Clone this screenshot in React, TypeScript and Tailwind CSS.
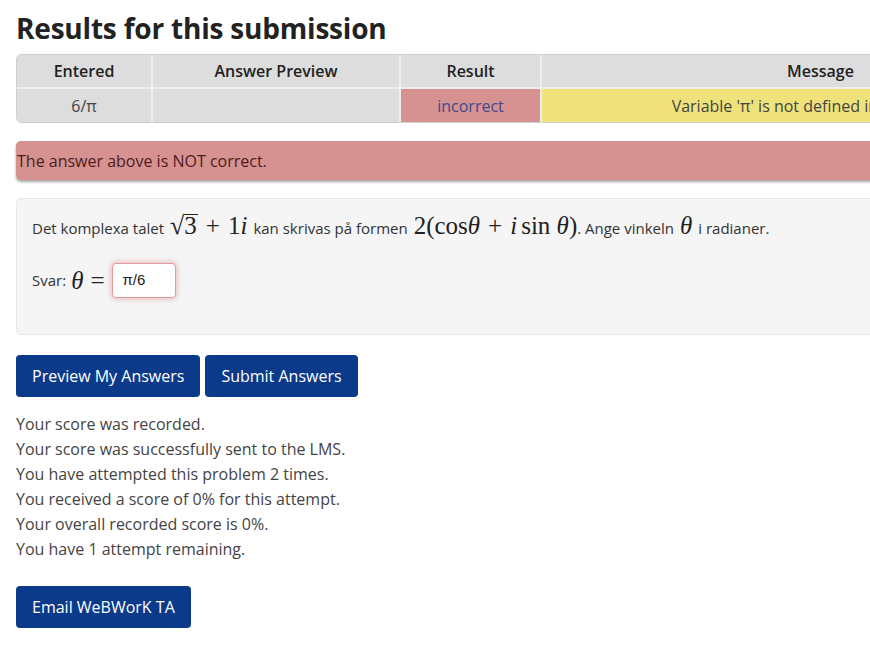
const Math = ({ children }: { children: React.ReactNode }) => (
  <span className="font-['Liberation_Serif','DejaVu_Serif',serif] text-[25px] leading-none text-[#222]">{children}</span>
);

const I = ({ children }: { children: React.ReactNode }) => <i>{children}</i>;

export default function App() {
  return (
    <div className="w-[870px] h-[662px] overflow-hidden bg-white font-['Open_Sans','Noto_Sans',sans-serif] text-[#333]">
      <div className="px-4 pt-[10px]">
        <h1 className="text-[28px] font-bold leading-[36px] text-[#222] tracking-[-0.2px]">Results for this submission</h1>

        <div className="mt-[8px] w-[1084px] rounded-[5px] border border-[#d0d0d0] overflow-hidden">
          <table className="w-full border-collapse text-[16px]">
            <thead>
              <tr className="bg-[#dddddd] h-[33px]">
                <th className="w-[135px] border-r-2 border-b-2 border-[#eeeeee] font-semibold text-[#222]">Entered</th>
                <th className="w-[248px] border-r-2 border-b-2 border-[#eeeeee] font-semibold text-[#222]">Answer Preview</th>
                <th className="w-[141px] border-r-2 border-b-2 border-[#eeeeee] font-semibold text-[#222]">Result</th>
                <th className="border-b-2 border-[#eeeeee] font-semibold text-[#222]">Message</th>
              </tr>
            </thead>
            <tbody>
              <tr className="h-[34px]">
                <td className="bg-[#dddddd] border-r-2 border-[#eeeeee] text-center text-[#444]">6/π</td>
                <td className="bg-[#dddddd] border-r-2 border-[#eeeeee]"></td>
                <td className="bg-[#d69191] border-r-2 border-[#eeeeee] text-center text-[#3f4a8c]">incorrect</td>
                <td className="bg-[#efe27a] text-center text-[#444] whitespace-nowrap">Variable 'π' is not defined in this context</td>
              </tr>
            </tbody>
          </table>
        </div>

        <div className="mt-[18px] w-[900px] h-[39px] rounded-[5px] bg-[#d69191] shadow-[0_2px_3px_rgba(0,0,0,0.35)] flex items-center pl-px text-[16px] text-[#4e1c1c]">
          The answer above is NOT correct.
        </div>

        <div className="mt-[18px] w-[900px] h-[137px] rounded-[5px] bg-[#f5f5f5] border border-[#e8e8e8] px-[15px] pt-[14px] text-[15px] text-[#333]">
          <p className="h-[30px] flex items-baseline gap-[6px] whitespace-nowrap leading-[30px]">
            <span>Det komplexa talet</span>
            <Math>
              <span className="inline-flex items-baseline">
                <span className="text-[26px]">√</span>
                <span className="border-t border-[#222] leading-[22px] pr-px">3</span>
              </span>
              <span className="mx-[8px]">+</span>1<I>i</I>
            </Math>
            <span>kan skrivas på formen</span>
            <Math>
              2(cos<I>θ</I>
              <span className="mx-[8px]">+</span>
              <I>i</I>
              <span className="ml-[4px]">sin</span> <I>θ</I>)
            </Math>
            <span className="-ml-[6px]">. Ange vinkeln</span>
            <Math>
              <I>θ</I>
            </Math>
            <span>i radianer.</span>
          </p>
          <div className="mt-[20px] h-[35px] flex items-center gap-[5px]">
            <span>Svar:</span>
            <Math>
              <I>θ</I>
              <span className="ml-[7px]">=</span>
            </Math>
            <div className="ml-[2px] w-[64px] h-[35px] rounded-[4px] border border-[#e29a9a] bg-white shadow-[0_0_4px_2px_rgba(214,120,120,0.35)] flex items-center pl-[10px] font-['Liberation_Sans',sans-serif] text-[15px] text-[#222]">
              π/6
            </div>
          </div>
        </div>

        <div className="mt-[20px] flex gap-[5px]">
          <button className="h-[42px] px-[16px] rounded-[4px] bg-[#0b3a8b] text-white text-[16px]">Preview My Answers</button>
          <button className="h-[42px] px-[16px] rounded-[4px] bg-[#0b3a8b] text-white text-[16px]">Submit Answers</button>
        </div>

        <div className="mt-[15px] text-[16px] leading-[25px] text-[#444]">
          <div>Your score was recorded.</div>
          <div>Your score was successfully sent to the LMS.</div>
          <div>You have attempted this problem 2 times.</div>
          <div>You received a score of 0% for this attempt.</div>
          <div>Your overall recorded score is 0%.</div>
          <div>You have 1 attempt remaining.</div>
        </div>

        <button className="mt-[24px] h-[42px] px-[16px] rounded-[4px] bg-[#0b3a8b] text-white text-[16px]">Email WeBWorK TA</button>
      </div>
    </div>
  );
}
